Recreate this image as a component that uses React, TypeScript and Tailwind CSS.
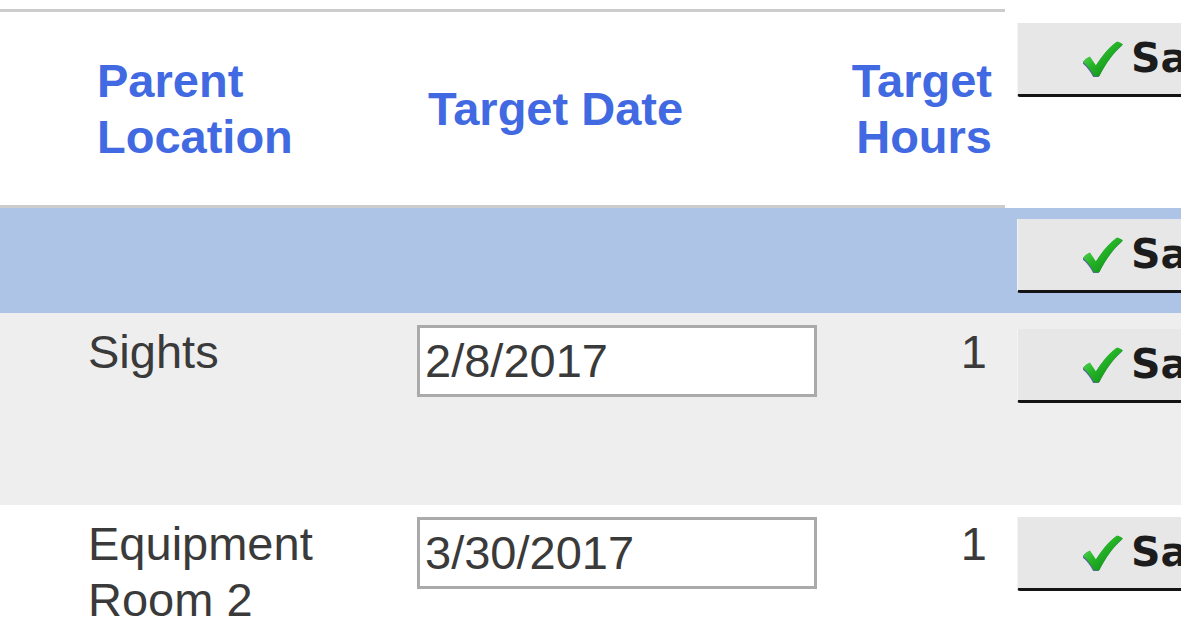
import React from 'react'

const rows = [
  { loc: '', date: '', hours: '', bg: 'bg-[#adc4e6]', h: 'h-[105px]', btn: 'pt-[11px]' },
  { loc: 'Sights', date: '2/8/2017', hours: '1', bg: 'bg-[#eeeeee]', h: 'h-[192px]', btn: 'pt-[16px]' },
  { loc: 'Equipment Room 2', date: '3/30/2017', hours: '1', bg: 'bg-white', h: 'h-[140px]', btn: 'pt-[12px]' },
]

const CHECK_D = 'M0 22 C2 19 5 17 7 16.5 L13 25.5 C19 16 26 7 34 1.5 C36.5 2 38.5 3 40 4.5 C31 12 23 23 16.5 36 C14.5 36.5 12.5 36.5 11 36 C8 30 4 25 0 22 Z'

function Check() {
  return (
    <svg width="40" height="37" viewBox="0 0 40 37" className="shrink-0">
      <defs>
        <linearGradient id="chk" x1="0" y1="0" x2="1" y2="1">
          <stop offset="0" stopColor="#7ae87a" />
          <stop offset="0.45" stopColor="#25b525" />
          <stop offset="1" stopColor="#0a7a18" />
        </linearGradient>
      </defs>
      <path d={CHECK_D} fill="#23407a" opacity="0.75" transform="translate(-0.8 1)" />
      <path d={CHECK_D} fill="url(#chk)" />
    </svg>
  )
}

function SaveButton() {
  return (
    <div className="flex items-center w-[260px] h-[74px] pl-[65px] gap-[8px] bg-[#e7e7e7] border-l border-[#f4f4f4] border-b-[3px] border-b-[#141414] rounded-bl-[3px]">
      <Check />
      <span className="font-['DejaVu_Sans',sans-serif] font-bold text-[41px] leading-none text-[#1c1c1c]">Save</span>
    </div>
  )
}

export default function App() {
  return (
    <div className="w-[1181px] h-[627px] overflow-hidden bg-white pt-[9px] font-['Liberation_Sans',Arial,sans-serif] text-[47px] leading-[56px]">
      {/* Header */}
      <div className="flex w-[1300px]">
        <div className="flex w-[1005px] h-[199px] border-y-[3px] border-[#cccccc] font-bold text-[#4169e1]">
          <div className="w-[410px] pl-[97px] flex items-center">
            <span>Parent<br />Location</span>
          </div>
          <div className="w-[420px] pl-[18px] flex items-center">Target Date</div>
          <div className="w-[175px] pr-[13px] flex items-center justify-end text-right">
            <span>Target<br />Hours</span>
          </div>
        </div>
        <div className="pl-[12px] pt-[14px]">
          <SaveButton />
        </div>
      </div>

      {/* Body rows */}
      {rows.map((r, i) => (
        <div key={i} className={`flex w-[1300px] ${r.h} ${r.bg} text-[#3a3a3a]`}>
          <div className="w-[410px] pl-[88px] pt-[11px]">
            {r.loc === 'Equipment Room 2' ? (
              <span>Equipment<br />Room 2</span>
            ) : (
              r.loc
            )}
          </div>
          <div className="w-[420px] pl-[7px] pt-[12px]">
            {r.date && (
              <div className="w-[400px] h-[72px] border-[3px] border-[#aaaaaa] bg-white pl-[5px] flex items-center">
                {r.date}
              </div>
            )}
          </div>
          <div className="w-[175px] pr-[18px] pt-[11px] text-right">{r.hours}</div>
          <div className={`pl-[12px] ${r.btn}`}>
            <SaveButton />
          </div>
        </div>
      ))}
    </div>
  )
}
